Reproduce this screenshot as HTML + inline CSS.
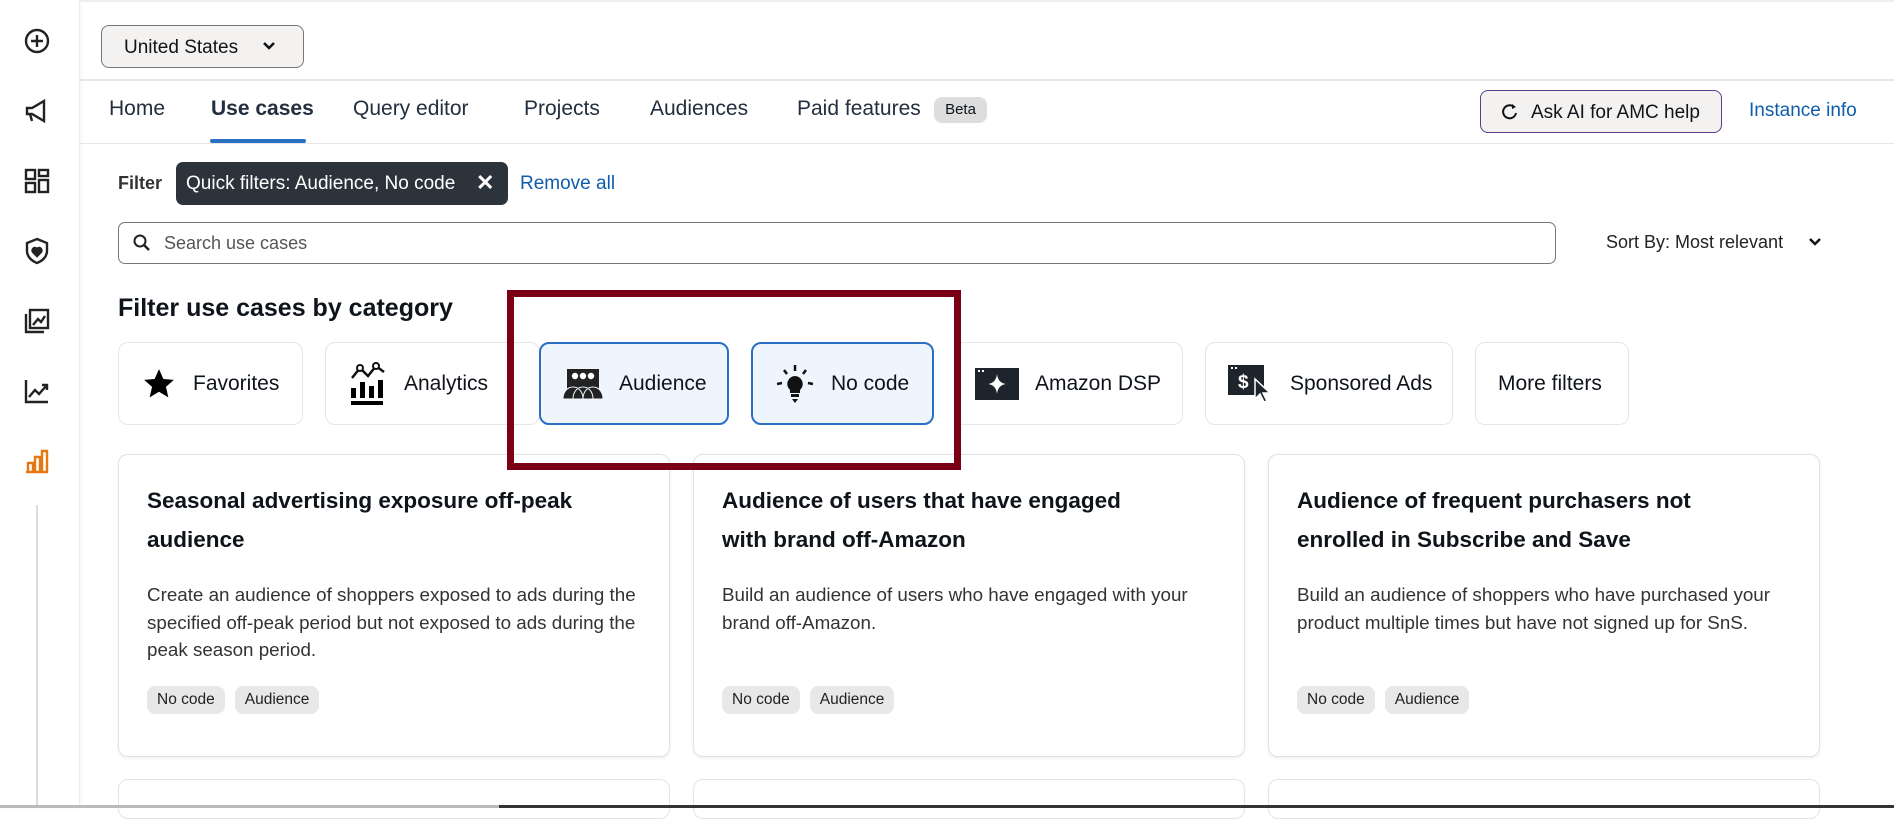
<!DOCTYPE html>
<html><head><meta charset="utf-8"><style>
*{box-sizing:border-box;margin:0;padding:0}
body{width:1894px;height:808px;overflow:hidden;background:#fff;font-family:"Liberation Sans",sans-serif;color:#0f141a;position:relative}
.a{position:absolute}
.side{left:0;top:0;width:80px;height:808px;background:#fff;border-right:1px solid #ececec;box-shadow:2px 0 4px rgba(0,0,0,.04)}
.ic{position:absolute;left:22px;width:30px;height:30px}
.tab{position:absolute;top:97px;font-size:21px;color:#232f3e}
.cat{position:absolute;top:342px;height:83px;border:1px solid #e6e6e6;border-radius:10px;background:#fff;font-size:21px;display:flex;align-items:center;padding-left:22px;gap:16px}
.cat.sel{background:#eef5fd;border:2px solid #2b6fc5}
.card{position:absolute;top:454px;width:552px;height:303px;border:1px solid #e3e3e3;border-radius:10px;background:#fff;box-shadow:0 1px 3px rgba(0,0,0,.08);padding:26px 28px}
.card h3{font-size:22.5px;line-height:39px;font-weight:bold;color:#0f141a}
.card p{position:absolute;left:28px;top:126px;right:24px;font-size:18.8px;line-height:27.5px;color:#333}
.tags{position:absolute;left:28px;top:231px;display:flex;gap:10px}
.tag{background:#e8e8e8;border-radius:8px;padding:5px 10px;font-size:15.5px;color:#222}
</style></head><body>
<div class="a side">
<svg class="ic" style="top:26px" viewBox="0 0 30 30" fill="none" stroke="#222" stroke-width="2.4"><circle cx="15" cy="15" r="11"/><path d="M15 9v12M9 15h12"/></svg>
<svg class="ic" style="top:96px" viewBox="0 0 30 30" fill="none" stroke="#222" stroke-width="2.4"><path d="M5 12h5l12-7v20l-12-7H5z M8 18l2 7"/></svg>
<svg class="ic" style="top:166px" viewBox="0 0 30 30" fill="none" stroke="#222" stroke-width="2.4"><rect x="4" y="4" width="9" height="9"/><rect x="17" y="4" width="9" height="6"/><rect x="4" y="17" width="9" height="9"/><rect x="17" y="14" width="9" height="12"/></svg>
<svg class="ic" style="top:236px" viewBox="0 0 30 30" fill="none" stroke="#222" stroke-width="2.4"><path d="M15 3l10 4v8c0 6-5 10-10 12C10 25 5 21 5 15V7z"/><path d="M15 20l-4-4a2.3 2.3 0 0 1 4-3 2.3 2.3 0 0 1 4 3z" fill="#222"/></svg>
<svg class="ic" style="top:306px" viewBox="0 0 30 30" fill="none" stroke="#222" stroke-width="2.4"><rect x="8" y="4" width="18" height="18"/><path d="M4 8v18h18 M11 19l5-6 3 3 4-6"/></svg>
<svg class="ic" style="top:376px" viewBox="0 0 30 30" fill="none" stroke="#222" stroke-width="2.4"><path d="M4 4v22h22 M7 21l6-7 4 4 8-9 M20 9h5v5"/></svg>
<svg class="ic" style="top:446px" viewBox="0 0 30 30" fill="none" stroke="#e47911" stroke-width="2.4"><path d="M4 26h22 M6 26V17h5v9 M13 26V11h5v15 M20 26V5h5v21"/></svg>
<div class="a" style="left:36px;top:505px;width:2px;height:303px;background:#ddd"></div>
</div>
<div class="a" style="left:80px;top:0;width:1814px;height:2px;background:#eee"></div>
<div class="a" style="left:101px;top:25px;width:203px;height:43px;border:1px solid #777;border-radius:8px;background:#f3f2f0;font-size:19px;padding:11px 0 0 22px">United States<svg class="a" style="left:160px;top:15px" width="14" height="10" viewBox="0 0 14 10"><path d="M2 2l5 5 5-5" fill="none" stroke="#111" stroke-width="2.5"/></svg></div>
<div class="a" style="left:80px;top:79px;width:1814px;height:2px;background:#e6e6e6"></div>
<div class="tab" style="left:109px">Home</div>
<div class="tab" style="left:211px;font-weight:bold">Use cases</div>
<div class="a" style="left:210px;top:139px;width:96px;height:4px;background:#2b6fc5;border-radius:2px"></div>
<div class="tab" style="left:353px">Query editor</div>
<div class="tab" style="left:524px">Projects</div>
<div class="tab" style="left:650px">Audiences</div>
<div class="tab" style="left:797px">Paid features</div>
<div class="a" style="left:934px;top:97px;width:53px;height:26px;background:#ddd;border-radius:8px;font-size:15px;text-align:center;line-height:26px">Beta</div>
<div class="a" style="left:1480px;top:90px;width:242px;height:43px;border:1.5px solid #5a3c8a;border-radius:8px;background:#f3f2f0;font-size:19px;padding:11px 0 0 50px">Ask AI for AMC help<svg class="a" style="left:20px;top:12px" width="18" height="18" viewBox="0 0 18 18"><path d="M13 4A6.5 6.5 0 1 0 15 10" fill="none" stroke="#111" stroke-width="2"/><path d="M11 1l4 3-4 2z" fill="#111"/></svg></div>
<div class="a" style="left:1749px;top:100px;font-size:19px;color:#0f5cad">Instance info</div>
<div class="a" style="left:80px;top:143px;width:1814px;height:1px;background:#e6e6e6"></div>
<div class="a" style="left:118px;top:173px;font-size:18px;font-weight:bold;color:#333">Filter</div>
<div class="a" style="left:176px;top:162px;width:332px;height:43px;background:#2c333b;border-radius:7px;color:#fff;font-size:19px;padding:11px 0 0 10px">Quick filters: Audience, No code<span class="a" style="left:300px;top:8px;font-size:22px;font-weight:bold">✕</span></div>
<div class="a" style="left:520px;top:173px;font-size:19px;color:#0f5cad">Remove all</div>
<div class="a" style="left:118px;top:222px;width:1438px;height:42px;border:1.5px solid #777;border-radius:7px"><svg class="a" style="left:14px;top:11px" width="18" height="18" viewBox="0 0 18 18"><circle cx="7" cy="7" r="5.5" fill="none" stroke="#222" stroke-width="2"/><path d="M11 11l5 5" stroke="#222" stroke-width="2.5"/></svg><span class="a" style="left:45px;top:10px;font-size:18px;color:#555">Search use cases</span></div>
<div class="a" style="left:1606px;top:232px;font-size:18px;color:#222">Sort By: Most relevant</div>
<svg class="a" style="left:1808px;top:237px" width="14" height="10" viewBox="0 0 14 10"><path d="M2 2l5 5 5-5" fill="none" stroke="#111" stroke-width="2.5"/></svg>
<div class="a" style="left:118px;top:294px;font-size:25px;font-weight:bold">Filter use cases by category</div>

<div class="cat" style="left:118px;width:185px"><svg width="36" height="34" viewBox="0 0 24 24"><path d="M12 1.5l3.1 7 7.4.6-5.6 4.9 1.7 7.4L12 17.5l-6.6 3.9 1.7-7.4L1.5 9.1l7.4-.6z"/></svg>Favorites</div>
<div class="cat" style="left:325px;width:215px"><svg width="40" height="44" viewBox="0 0 40 44"><path d="M4 16l8-10 8 8 8-10 8 6" fill="none" stroke="#111" stroke-width="2.5"/><circle cx="12" cy="6" r="3" fill="#fff" stroke="#111" stroke-width="2"/><circle cx="28" cy="4" r="3" fill="#fff" stroke="#111" stroke-width="2"/><rect x="3" y="26" width="5" height="10"/><rect x="12" y="20" width="5" height="16"/><rect x="21" y="24" width="5" height="12"/><rect x="30" y="18" width="5" height="18"/><rect x="3" y="39" width="32" height="4"/></svg>Analytics</div>
<div class="cat sel" style="left:539px;width:190px"><svg width="40" height="32" viewBox="0 0 40 32"><rect x="4" y="1" width="32" height="20" fill="#222"/><g fill="#fff"><circle cx="12" cy="8" r="3.2"/><circle cx="20" cy="8" r="3.2"/><circle cx="28" cy="8" r="3.2"/></g><path d="M0 31c0-8 5-12 10-12s10 4 10 12zM10 31c0-8 5-12 10-12s10 4 10 12zM20 31c0-8 5-12 10-12s10 4 10 12z" fill="#222" stroke="#eef5fd" stroke-width="1"/></svg>Audience</div>
<div class="cat sel" style="left:751px;width:183px"><svg width="40" height="40" viewBox="0 0 40 40"><path d="M20 12a8 8 0 0 0-5 14v3h10v-3a8 8 0 0 0-5-14z" fill="#111"/><rect x="16" y="30" width="8" height="3" fill="#111"/><path d="M17 35h6l-3 4z" fill="#111"/><path d="M20 1v6M9 6l3 4M31 6l-3 4M2 20l5-1M38 20l-5-1" stroke="#111" stroke-width="2.5"/></svg>No code</div>
<div class="cat" style="left:954px;width:229px;padding-left:20px"><svg width="44" height="32" viewBox="0 0 44 32"><rect width="44" height="32" fill="#1d242b"/><path d="M22 6q1 9 9 10q-8 1-9 10q-1-9-9-10q8-1 9-10z" fill="#fff"/><rect x="3" y="2" width="2" height="2" fill="#fff"/><rect x="7" y="2" width="2" height="2" fill="#fff"/></svg>Amazon DSP</div>
<div class="cat" style="left:1205px;width:248px"><svg width="46" height="38" viewBox="0 0 46 38"><rect width="36" height="30" fill="#1d242b"/><rect x="3" y="2" width="2" height="2" fill="#fff"/><rect x="7" y="2" width="2" height="2" fill="#fff"/><text x="10" y="23" font-family="Liberation Sans" font-weight="bold" font-size="19" fill="#fff">$</text><path d="M27 14v20l5-5 4 8 3-1-4-8h7z" fill="#1d242b" stroke="#fff" stroke-width="1.5"/></svg>Sponsored Ads</div>
<div class="cat" style="left:1475px;width:154px">More filters</div>

<div class="card" style="left:118px"><h3>Seasonal advertising exposure off-peak audience</h3><p>Create an audience of shoppers exposed to ads during the specified off-peak period but not exposed to ads during the peak season period.</p><div class="tags"><span class="tag">No code</span><span class="tag">Audience</span></div></div>
<div class="card" style="left:693px"><h3>Audience of users that have engaged<br>with brand off-Amazon</h3><p>Build an audience of users who have engaged with your brand off-Amazon.</p><div class="tags"><span class="tag">No code</span><span class="tag">Audience</span></div></div>
<div class="card" style="left:1268px"><h3>Audience of frequent purchasers not<br>enrolled in Subscribe and Save</h3><p>Build an audience of shoppers who have purchased your product multiple times but have not signed up for SnS.</p><div class="tags"><span class="tag">No code</span><span class="tag">Audience</span></div></div>
<div class="a" style="left:118px;top:779px;width:552px;height:40px;border:1px solid #e3e3e3;border-radius:10px"></div>
<div class="a" style="left:693px;top:779px;width:552px;height:40px;border:1px solid #e3e3e3;border-radius:10px"></div>
<div class="a" style="left:1268px;top:779px;width:552px;height:40px;border:1px solid #e3e3e3;border-radius:10px"></div>

<div class="a" style="left:507px;top:290px;width:454px;height:180px;border:7px solid #7a0016;z-index:5"></div>

<div class="a" style="left:0;top:805px;width:1894px;height:3px;background:#bbb"></div>
<div class="a" style="left:499px;top:805px;width:1395px;height:3px;background:#333"></div>
</body></html>
